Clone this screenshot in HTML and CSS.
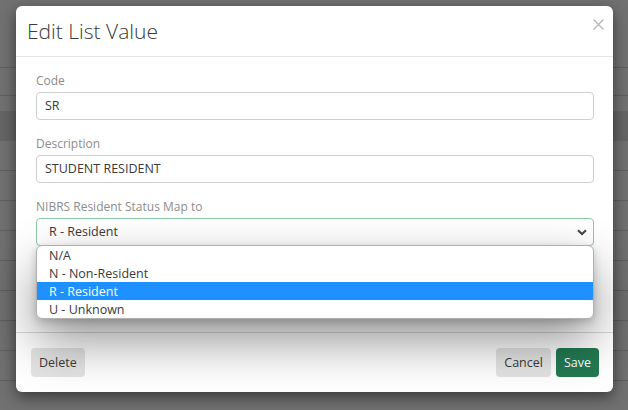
FILE: index.html
```html
<!DOCTYPE html>
<html>
<head>
<meta charset="utf-8">
<link rel="stylesheet" href="styles.css">
</head>
<body>
<div class="backdrop">
  <div class="bg-row r-top"></div>
  <div class="bg-row r-sub"></div>
  <div class="bg-row r-gap"></div>
  <div class="bg-row r-band"></div>
  <div class="bg-row"></div>
  <div class="bg-row"></div>
  <div class="bg-row"></div>
  <div class="bg-row"></div>
  <div class="bg-row"></div>
  <div class="bg-row"></div>
  <div class="bg-row"></div>
  <div class="bg-row"></div>
  <div class="bg-row"></div>
</div>

<div class="modal">
  <div class="modal-header">
    <h4 class="modal-title">Edit List Value</h4>
    <span class="close" aria-label="Close">
      <svg width="11" height="11" viewBox="0 0 11 11"><path d="M0.5 0.5 L10.5 10.5 M10.5 0.5 L0.5 10.5" stroke="#b4b4b4" stroke-width="1.2" fill="none"/></svg>
    </span>
  </div>
  <div class="modal-body">
    <div class="form-group">
      <div class="label">Code</div>
      <div class="field">SR</div>
    </div>
    <div class="form-group">
      <div class="label">Description</div>
      <div class="field">STUDENT RESIDENT</div>
    </div>
    <div class="form-group select-group">
      <div class="label">NIBRS Resident Status Map to</div>
      <div class="field select">
        <span>R - Resident</span>
        <svg class="chevron" width="10" height="7" viewBox="0 0 10 7"><path d="M1 1.2 L5 5 L9 1.2" stroke="#444" stroke-width="2" fill="none"/></svg>
      </div>
      <ul class="options">
        <li>N/A</li>
        <li>N - Non-Resident</li>
        <li class="selected">R - Resident</li>
        <li>U - Unknown</li>
      </ul>
    </div>
  </div>
  <div class="modal-footer">
    <button class="btn btn-light">Delete</button>
    <span class="spacer"></span>
    <button class="btn btn-light">Cancel</button>
    <button class="btn btn-save">Save</button>
  </div>
</div>
</body>
</html>
```

FILE: styles.css
```css
html, body {
  margin: 0;
  padding: 0;
}
body {
  width: 628px;
  height: 410px;
  overflow: hidden;
  background: #717171;
  font-family: "Open Sans", "DejaVu Sans", sans-serif;
  position: relative;
}
.backdrop {
  display: flex;
  flex-direction: column;
}
.bg-row {
  height: 29px;
  border-bottom: 1px solid #5f5f5f;
  flex: none;
}
.r-top { height: 67px; }
.r-sub { height: 27px; }
.r-gap { height: 15px; border-bottom: none; }
.r-band { height: 30px; background: #656565; border-bottom: none; }

.modal {
  position: absolute;
  left: 16px;
  top: 6px;
  width: 597px;
  height: 386px;
  background: #fff;
  border-radius: 6px;
  box-shadow: 0 5px 15px rgba(0,0,0,0.5);
  display: flex;
  flex-direction: column;
}
.modal-header {
  height: 50px;
  border-bottom: 1px solid #e5e5e5;
  display: flex;
  align-items: center;
  padding: 0 10px 0 11px;
  position: relative;
}
.modal-title {
  margin: 0;
  font-size: 21px;
  font-weight: 300;
  color: #3a3a3a;
  line-height: 28px;
}
.close {
  position: absolute;
  right: 9px;
  top: 13px;
  width: 11px;
  height: 11px;
}
.close svg { display: block; }

.modal-body {
  flex: 1;
  padding: 15px 19px 0 20px;
  position: relative;
}
.form-group {
  margin-bottom: 15px;
  position: relative;
}
.label {
  font-size: 12px;
  line-height: 18px;
  color: #8c8c8c;
  margin-bottom: 2px;
}
.field {
  height: 26px;
  border: 1px solid #cfcfcf;
  border-radius: 4px;
  padding: 0 8px;
  font-size: 12.5px;
  line-height: 26px;
  color: #3a3a3a;
  display: flex;
  align-items: center;
}
.select {
  border-color: #8cc9a6;
  padding: 0 6px 0 12px;
  justify-content: space-between;
}
.chevron { display: block; }

.options {
  position: absolute;
  left: 0;
  right: 0;
  top: 47px;
  margin: 0;
  padding: 0;
  list-style: none;
  background: #fff;
  border: 1px solid #b0b0b0;
  border-radius: 6px;
  box-shadow: 0 22px 50px rgba(0,0,0,0.42), 0 3px 8px rgba(0,0,0,0.18);
  overflow: hidden;
  z-index: 2;
}
.options li {
  height: 18px;
  line-height: 19px;
  padding-left: 12px;
  font-size: 12.5px;
  color: #3a3a3a;
}
.options li.selected {
  background: #1e90ff;
  color: #fff;
}

.modal-footer {
  height: 59px;
  border-top: 1px solid #d8d8d8;
  display: flex;
  align-items: center;
  padding: 0 14px 0 15px;
  gap: 5px;
}
.spacer { flex: 1; }
.btn {
  font-family: "Open Sans", "DejaVu Sans", sans-serif;
  font-size: 12.5px;
  height: 29px;
  border: none;
  border-radius: 4px;
  padding: 0 8px;
  cursor: pointer;
}
.btn-light {
  background: #e4e4e4;
  color: #3a3a3a;
}
.btn-save {
  background: #237a52;
  color: #fff;
}
```
